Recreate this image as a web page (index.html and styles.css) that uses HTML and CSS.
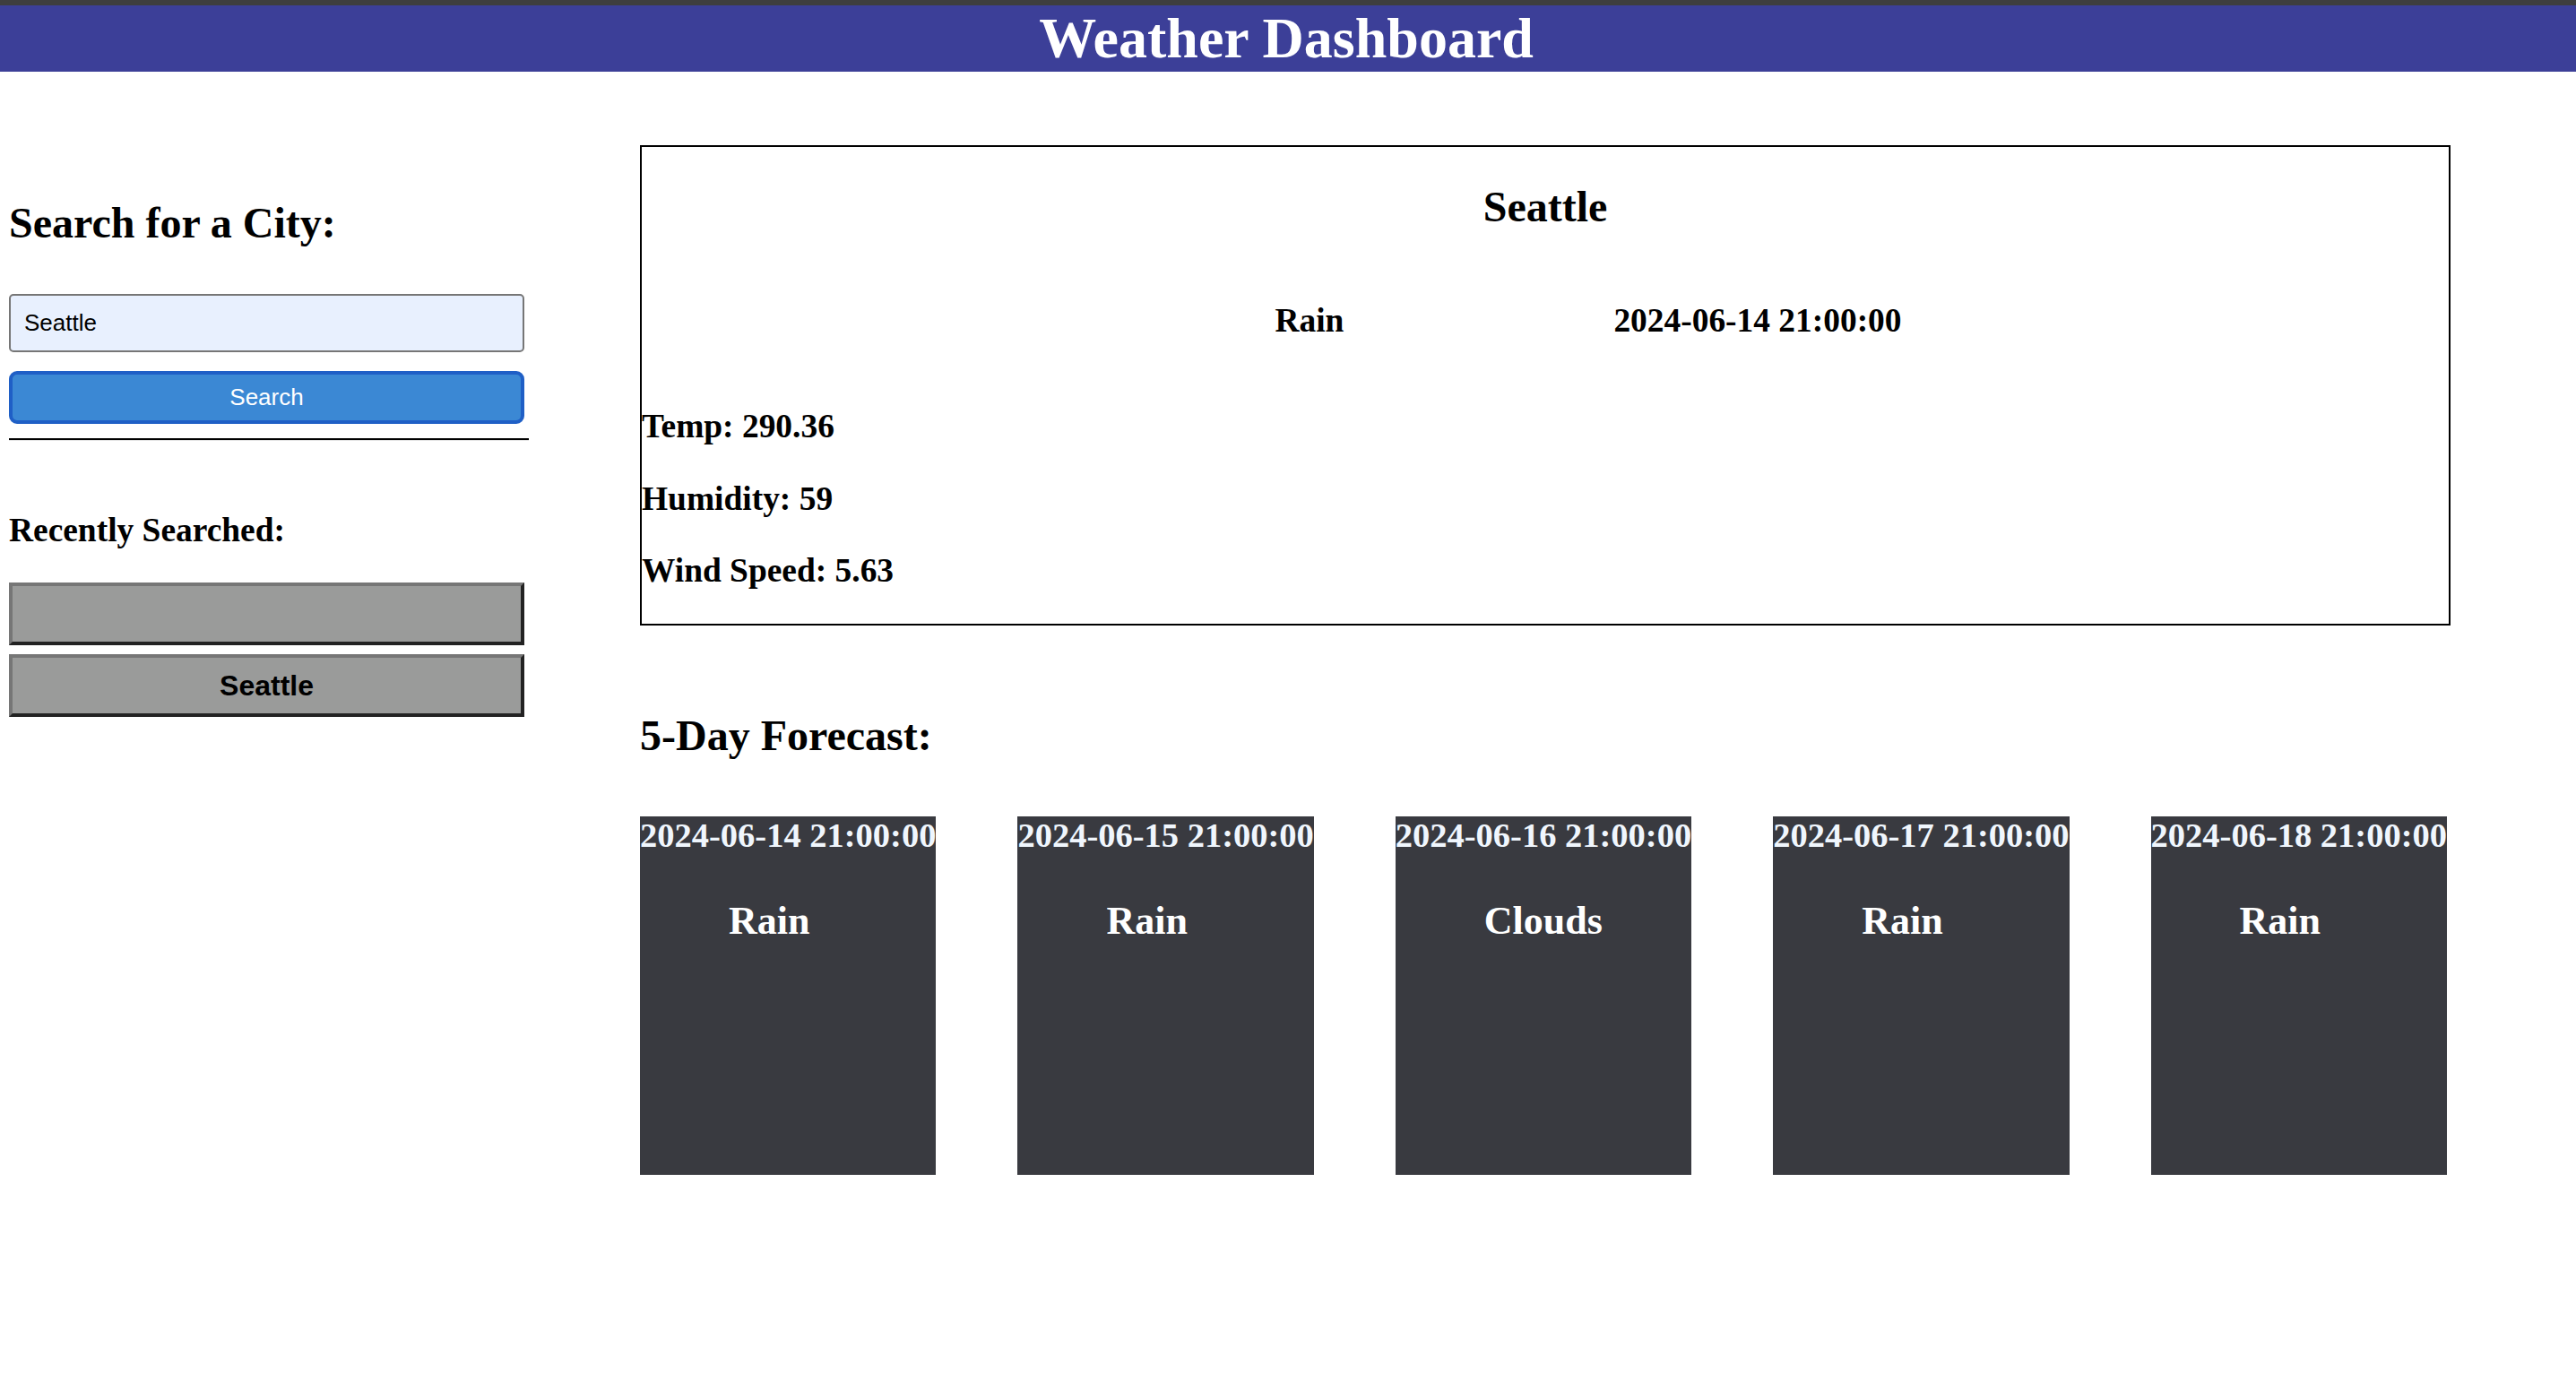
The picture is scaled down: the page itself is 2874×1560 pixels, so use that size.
FILE: index.html
```html
<!DOCTYPE html>
<html lang="en">
<head>
<meta charset="utf-8">
<title>Weather Dashboard</title>
<link rel="stylesheet" href="styles.css">
</head>
<body>
<header class="top">
  <h1 class="title">Weather Dashboard</h1>
</header>
<div class="layout">
  <aside class="sidebar">
    <h2 class="side-title">Search for a City:</h2>
    <input class="city-input" type="text" value="Seattle">
    <button class="search-btn">Search</button>
    <hr class="divider">
    <h3 class="recent-title">Recently Searched:</h3>
    <button class="history-btn"></button>
    <button class="history-btn">Seattle</button>
  </aside>
  <main class="main">
    <section class="current">
      <h2 class="city-name">Seattle</h2>
      <div class="current-row">
        <span class="icon-space"></span>
        <h3 class="cond">Rain</h3>
        <h3 class="stamp">2024-06-14 21:00:00</h3>
      </div>
      <h3 class="stat">Temp: 290.36</h3>
      <h3 class="stat">Humidity: 59</h3>
      <h3 class="stat">Wind Speed: 5.63</h3>
    </section>
    <h2 class="forecast-title">5-Day Forecast:</h2>
    <div class="forecast">
      <div class="day"><h3 class="day-date">2024-06-14 21:00:00</h3><div class="day-cond">Rain</div></div>
      <div class="day"><h3 class="day-date">2024-06-15 21:00:00</h3><div class="day-cond">Rain</div></div>
      <div class="day"><h3 class="day-date">2024-06-16 21:00:00</h3><div class="day-cond">Clouds</div></div>
      <div class="day"><h3 class="day-date">2024-06-17 21:00:00</h3><div class="day-cond">Rain</div></div>
      <div class="day"><h3 class="day-date">2024-06-18 21:00:00</h3><div class="day-cond">Rain</div></div>
    </div>
  </main>
</div>
</body>
</html>
```
FILE: styles.css
```css
html, body {
  margin: 0;
  padding: 0;
  background: #ffffff;
}
body {
  font-family: "Liberation Serif", "Times New Roman", serif;
  color: #000;
}
.top {
  background: #3c3f98;
  border-top: 6px solid #3e3e3e;
}
.title {
  margin: 0;
  font-size: 64px;
  font-weight: bold;
  color: #ffffff;
  text-align: center;
  line-height: normal;
  padding-right: 4px;
}
.layout {
  display: flex;
  align-items: flex-start;
  gap: 124px;
  padding: 82px 0 0 10px;
}
.sidebar {
  width: 580px;
  flex: none;
  display: flex;
  flex-direction: column;
  align-items: flex-start;
}
.side-title {
  font-size: 48px;
  margin: 59px 0 0;
}
.city-input {
  box-sizing: border-box;
  width: 575px;
  height: 65px;
  margin-top: 52px;
  padding: 0 15px;
  border: 2px solid #767676;
  border-radius: 5px;
  background: #e8f0fe;
  font-family: "Liberation Sans", Arial, sans-serif;
  font-size: 26px;
  color: #000;
}
.search-btn {
  box-sizing: border-box;
  width: 575px;
  height: 59px;
  margin-top: 21px;
  border: 4px solid #1f5fc6;
  border-radius: 9px;
  background: #3b88d4;
  color: #ffffff;
  font-family: "Liberation Sans", Arial, sans-serif;
  font-size: 26px;
  padding: 0;
}
.divider {
  box-sizing: border-box;
  width: 580px;
  margin: 16px 0 0;
  border: none;
  border-top: 2px solid #000;
  border-bottom: 1px solid #e4e4e4;
  height: 3px;
}
.recent-title {
  font-size: 37.44px;
  margin: 78px 0 37px;
}
.history-btn {
  box-sizing: border-box;
  width: 575px;
  height: 70px;
  margin: 0 0 10px;
  padding: 0;
  background: #9a9b9a;
  border-style: solid;
  border-width: 4px;
  border-color: #767676 #222222 #222222 #767676;
  font-family: "Liberation Sans", Arial, sans-serif;
  font-weight: bold;
  font-size: 32px;
  color: #000;
}
.main {
  width: 2016px;
  flex: none;
}
.current {
  width: 2016px;
  border: 2px solid #000;
}
.city-name {
  font-size: 48px;
  text-align: center;
  margin: 39px 0 41px;
}
.current-row {
  display: flex;
  justify-content: center;
}
.icon-space {
  width: 96px;
}
.cond, .stamp, .stat {
  font-size: 37.44px;
  margin: 37.44px 0;
}
.stamp {
  margin-left: 301px;
}
.forecast-title {
  font-size: 48px;
  margin: 95px 0 0;
}
.forecast {
  display: flex;
  justify-content: space-between;
  margin-top: 63px;
}
.day {
  height: 400px;
  background: #393a40;
  color: #ffffff;
}
.day-date {
  margin: 0;
  font-size: 38.5px;
  line-height: 43px;
  color: #f0f6fd;
  white-space: nowrap;
}
.day-cond {
  font-size: 44px;
  font-weight: bold;
  margin-top: 48px;
  padding-left: 99px;
}
```
